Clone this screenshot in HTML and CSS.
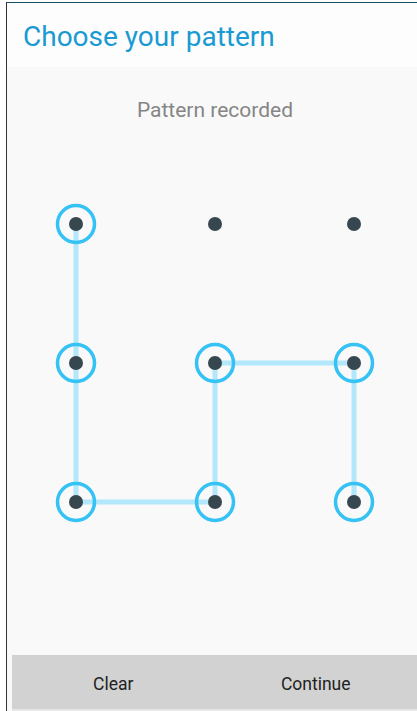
FILE: index.html
```html
<!DOCTYPE html>
<html>
<head>
<meta charset="utf-8">
<link rel="stylesheet" href="styles.css">
</head>
<body>
<div class="screen">
  <header class="header"><h1 class="title">Choose your pattern</h1></header>
  <main class="main">
    <p class="status">Pattern recorded</p>
    <svg class="pattern" width="410" height="420" viewBox="0 0 410 420">
      <g stroke="#b3e7fb" stroke-width="5" fill="none" stroke-linecap="butt">
        <polyline points="69,102 69,241 69,380 208,380 208,241 347,241 347,380"/>
      </g>
      <g stroke="#35c2f4" stroke-width="3.5" fill="none">
        <circle cx="69" cy="102" r="18.5"/>
        <circle cx="69" cy="241" r="18.5"/>
        <circle cx="69" cy="380" r="18.5"/>
        <circle cx="208" cy="380" r="18.5"/>
        <circle cx="208" cy="241" r="18.5"/>
        <circle cx="347" cy="241" r="18.5"/>
        <circle cx="347" cy="380" r="18.5"/>
      </g>
      <g fill="#37474f">
        <circle cx="69" cy="102" r="7"/>
        <circle cx="208" cy="102" r="7"/>
        <circle cx="347" cy="102" r="7"/>
        <circle cx="69" cy="241" r="7"/>
        <circle cx="208" cy="241" r="7"/>
        <circle cx="347" cy="241" r="7"/>
        <circle cx="69" cy="380" r="7"/>
        <circle cx="208" cy="380" r="7"/>
        <circle cx="347" cy="380" r="7"/>
      </g>
    </svg>
  </main>
  <footer class="footer">
    <button class="btn">Clear</button>
    <button class="btn">Continue</button>
  </footer>
</div>
</body>
</html>
```
FILE: styles.css
```css
html, body {
  margin: 0;
  padding: 0;
  background: #ffffff;
  font-family: Roboto, "Noto Sans", sans-serif;
}
.screen {
  margin: 2px 0 0 6px;
  height: 709px;
  border-top: 1px solid #1d5169;
  border-left: 1px solid #333333;
  display: flex;
  flex-direction: column;
  background: #f9f9f9;
  box-sizing: border-box;
}
.header {
  height: 64px;
  background: #fdfdfd;
  display: flex;
  align-items: center;
  padding-left: 16px;
  flex-shrink: 0;
}
.title {
  margin: 0;
  font-size: 28px;
  font-weight: 400;
  color: #1a9ad2;
  padding-top: 3px;
}
.main {
  flex: 1;
  display: flex;
  flex-direction: column;
  align-items: center;
  padding-top: 31px;
}
.status {
  margin: 0;
  font-size: 21px;
  line-height: 24px;
  color: #858585;
  width: 100%;
  text-align: center;
  padding-left: 6px;
  box-sizing: border-box;
}
.pattern {
  display: block;
}
.footer {
  height: 54px;
  margin-left: 5px;
  background: #d2d2d2;
  border-bottom: 2px solid #e6e6e6;
  display: flex;
  flex-shrink: 0;
}
.btn {
  flex: 1;
  border: none;
  background: transparent;
  font-family: Roboto, "Noto Sans", sans-serif;
  font-size: 17.5px;
  color: #222222;
  padding: 4px 0 0 0;
}
```
